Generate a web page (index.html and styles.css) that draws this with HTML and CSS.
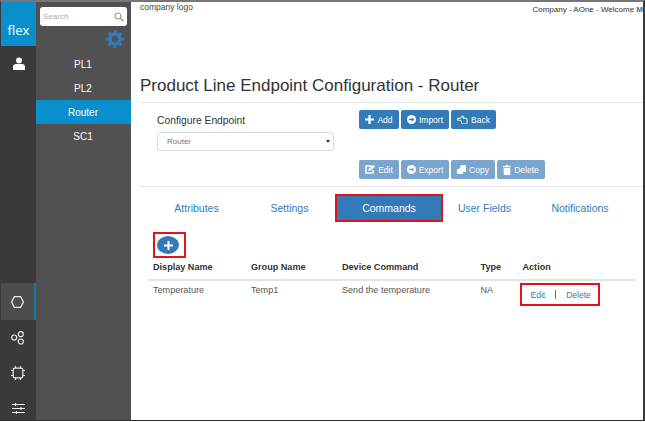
FILE: index.html
```html
<!DOCTYPE html>
<html lang="en">
<head>
<meta charset="utf-8">
<title>Product Line Endpoint Configuration</title>
<link rel="stylesheet" href="styles.css">
</head>
<body>
<div class="app">
  <nav class="rail">
    <div class="brand">flex</div>
    <div class="rail-item user">
      <svg width="14" height="14" viewBox="0 0 14 14"><circle cx="7" cy="3.6" r="3" fill="#fff"/><path d="M1 13V9.6C1 8 2.4 7 4 7h6c1.6 0 3 1 3 2.6V13z" fill="#fff"/></svg>
    </div>
    <div class="rail-fill"></div>
    <div class="rail-item active">
      <svg width="13" height="12" viewBox="0 0 13 12"><path d="M3.4.7h6.2l2.800 5.300-2.800 5.300H3.400L.6 6z" fill="none" stroke="#ececec" stroke-width="1.200"/></svg>
    </div>
    <div class="rail-item net">
      <svg width="14" height="14" viewBox="0 0 14 14"><g fill="none" stroke="#ececec" stroke-width="1.200"><circle cx="3.200" cy="6.500" r="2.500"/><circle cx="9.800" cy="3.200" r="2.500"/><circle cx="9.800" cy="10.500" r="2.500"/></g></svg>
    </div>
    <div class="rail-item chip">
      <svg width="14" height="14" viewBox="0 0 14 14"><g fill="none" stroke="#ececec" stroke-width="1.200"><rect x="2.200" y="2.200" width="9.600" height="9.600" rx="1.500"/><path d="M4.500 0v2M9.500 0v2M4.500 12v2M9.500 12v2M0 4.500h2M0 9.500h2M12 4.500h2M12 9.500h2"/></g></svg>
    </div>
    <div class="rail-item last">
      <svg width="13" height="11" viewBox="0 0 13 11"><g stroke="#ececec" stroke-width="1.100"><path d="M0 1.500h13M0 5.500h13M0 9.500h13"/><path d="M3.500 0v3M9 4v3M4.500 8v3"/></g></svg>
    </div>
  </nav>

  <aside class="panel">
    <div class="search">
      <span class="search-text">Search</span>
      <svg width="10" height="10" viewBox="0 0 10 10"><circle cx="4" cy="4" r="3" fill="none" stroke="#999" stroke-width="1.200"/><path d="M6.300 6.300 9.300 9.300" stroke="#999" stroke-width="1.500"/></svg>
    </div>
    <div class="gear-row">
      <svg width="18" height="18" viewBox="0 0 18 18"><g fill="none" stroke="#337ab7"><circle cx="9" cy="9" r="5" stroke-width="3.600"/><circle cx="9" cy="9" r="7.500" stroke-width="3" stroke-dasharray="3.100 2.790" stroke-dashoffset="1.550"/></g></svg>
    </div>
    <ul class="lines">
      <li>PL1</li>
      <li>PL2</li>
      <li class="current">Router</li>
      <li>SC1</li>
    </ul>
  </aside>

  <main class="main">
    <header class="top">
      <span class="logo">company logo</span>
      <span class="welcome">Company - AOne - Welcome <b>M</b></span>
    </header>
    <h1 class="title">Product Line Endpoint Configuration - Router</h1>

    <section class="config">
      <div class="endpoint">
        <label class="endpoint-label">Configure Endpoint</label>
        <div class="select"><span>Router</span><i class="caret"></i></div>
      </div>
      <div class="actions">
        <div class="btn-row">
          <a class="btn w-add"><svg width="9" height="9" viewBox="0 0 9 9"><path d="M3.400 0h2.200v3.400H9v2.200H5.600V9H3.400V5.600H0V3.400h3.400z" fill="#fff"/></svg>Add</a>
          <a class="btn w-import"><svg width="9" height="9" viewBox="0 0 9 9"><circle cx="4.500" cy="4.500" r="4.500" fill="#fff"/><path d="M2 3.700h3V2.400L7.300 4.500 5 6.600V5.300H2z" fill="#337ab7"/></svg>Import</a>
          <a class="btn w-back"><svg width="11" height="9" viewBox="0 0 11 9"><path d="M.5 3.200h3.300L5.500.8l.9.5-.5 1.900h3.300l.9.800v4.200l-.8.800H5.200L3.800 5.200H.5z" fill="none" stroke="#fff" stroke-width="1"/></svg>Back</a>
        </div>
        <div class="btn-row muted">
          <a class="btn w-add"><svg width="10" height="9" viewBox="0 0 10 9"><path d="M7 1H1v7h7V5" fill="none" stroke="#fff" stroke-width="1.500"/><path d="M3.500 4 8.500 0 10 1.500 5 6H3.500z" fill="#fff"/></svg>Edit</a>
          <a class="btn w-import"><svg width="9" height="9" viewBox="0 0 9 9"><circle cx="4.500" cy="4.500" r="4.500" fill="#fff"/><path d="M2 3.700h3V2.400L7.300 4.500 5 6.600V5.300H2z" fill="#7aa5cc"/></svg>Export</a>
          <a class="btn w-copy"><svg width="9" height="9" viewBox="0 0 9 9"><path d="M4 0h5v7H6v2H0V4.500L3 3.500z" fill="#fff"/></svg>Copy</a>
          <a class="btn w-delete"><svg width="8" height="10" viewBox="0 0 8 10"><path d="M0 1h2.500V0h3v1H8v1.200H0zM.7 3h6.600v7H.7z" fill="#fff"/></svg>Delete</a>
        </div>
      </div>
    </section>

    <section class="tabs">
      <a class="tab t-attr">Attributes</a>
      <a class="tab t-set">Settings</a>
      <a class="tab t-cmd">Commands</a>
      <a class="tab t-user">User Fields</a>
      <a class="tab t-note">Notifications</a>
    </section>

    <div class="add-wrap">
      <div class="add-box">
        <span class="add-round"><svg width="9" height="9" viewBox="0 0 9 9"><path d="M3.500 0h2v3.500H9v2H5.500V9h-2V5.500H0v-2h3.500z" fill="#fff"/></svg></span>
      </div>
    </div>

    <div class="table">
      <div class="thead">
        <span>Display Name</span><span>Group Name</span><span>Device Command</span><span>Type</span><span>Action</span>
      </div>
      <div class="trow">
        <span>Temperature</span><span>Temp1</span><span>Send the temperature</span><span>NA</span>
        <span class="row-actions"><a>Edit</a><i class="sep"></i><a>Delete</a></span>
      </div>
    </div>
  </main>
</div>
</body>
</html>
```
FILE: styles.css
```css
* { box-sizing: border-box; }
html, body { margin: 0; padding: 0; height: 100%; }
body { font-family: "Liberation Sans", Arial, sans-serif; background: #fff; overflow: hidden; }
a { text-decoration: none; cursor: pointer; }

.app {
  display: flex;
  width: 645px;
  height: 421px;
  border: 1px solid #3a3a3a;
  border-top: 2px solid #777;
  border-right-width: 2px;
  border-bottom-color: #333;
}

/* Icon rail */
.rail { width: 35px; flex: none; background: #3a3a3a; display: flex; flex-direction: column; }
.brand {
  height: 44px;
  flex: none;
  background: #0a8fcd;
  color: #fff;
  font-family: "Open Sans", sans-serif;
  font-size: 13px;
  display: flex;
  align-items: center;
  justify-content: center;
  padding-top: 12px;
}
.rail-item { display: flex; align-items: center; justify-content: center; flex: none; padding-right: 1px; }
.user { height: 36px; padding-right: 0; padding-left: 1px; }
.rail-fill { flex: 1; }
.active { height: 37px; background: #4d4d4d; border-right: 2px solid #1479a8; padding-right: 0; }
.net { height: 35px; }
.chip { height: 36px; }
.last { height: 29px; padding-top: 5px; }

/* Tree panel */
.panel { width: 95px; flex: none; background: #515151; display: flex; flex-direction: column; }
.search {
  margin: 5px 4px 0 4px;
  height: 19px;
  flex: none;
  background: #fff;
  border-radius: 3px;
  padding: 0 3px 0 3px;
  display: flex;
  align-items: center;
  justify-content: space-between;
}
.search-text { color: #aaa; font-size: 8px; }
.gear-row { display: flex; justify-content: flex-end; padding: 4px 7px 0 0; height: 26px; flex: none; }
.lines { list-style: none; margin: 0; padding: 0; }
.lines li {
  height: 24px;
  display: flex;
  align-items: center;
  justify-content: center;
  color: #fff;
  font-size: 10px;
  padding-right: 1px;
}
.lines li.current { background: #0a8fcd; }

/* Main */
.main { flex: 1; min-width: 0; display: flex; flex-direction: column; }
.top { display: flex; justify-content: space-between; height: 23px; padding: 0 0 0 9px; font-size: 8px; color: #444; }
.logo { font-size: 8.500px; }
.welcome { padding-top: 3px; white-space: nowrap; color: #333; }
.welcome b { color: #2e6da4; }
.title {
  margin: 0;
  padding: 50px 0 0 9px;
  font-size: 17px;
  line-height: 22px;
  font-weight: 400;
  color: #333;
  white-space: nowrap;
}

.config {
  margin: 5px 0 0 9px;
  width: 503px;
  height: 85px;
  border-top: 1px solid #e4e4e4;
  border-bottom: 1px solid #e4e4e4;
  display: flex;
}
.endpoint { width: 219px; padding: 11px 0 0 17px; display: flex; flex-direction: column; }
.endpoint-label { font-size: 10.300px; color: #333; line-height: 13px; }
.select {
  margin-top: 5px;
  width: 177px;
  height: 19px;
  border: 1px solid #dcdcdc;
  border-radius: 3px;
  display: flex;
  align-items: center;
  justify-content: space-between;
  padding: 0 3px 0 9px;
  font-size: 8px;
  color: #777;
}
.caret { width: 0; height: 0; border: 2px solid transparent; border-top: 3px solid #333; border-bottom: 0; }
.actions { display: flex; flex-direction: column; gap: 31px; padding-top: 7px; }
.btn-row { display: flex; gap: 2px; }
.btn {
  height: 19px;
  background: #337ab7;
  border-radius: 2px;
  color: #fff;
  font-size: 8.500px;
  display: flex;
  align-items: center;
  justify-content: center;
  gap: 3px;
}
.muted .btn { background: #7aa5cc; }
.w-add { width: 40px; }
.w-import { width: 48px; }
.w-back { width: 45px; }
.w-copy { width: 44px; }
.w-delete { width: 48px; }

.tabs { display: flex; height: 28px; margin: 7px 0 0 9px; }
.tab { display: flex; align-items: center; justify-content: center; color: #337ab7; font-size: 10.500px; }
.t-attr { width: 113px; }
.t-set { width: 82px; padding-right: 9px; }
.t-cmd { width: 108px; background: #337ab7; color: #fff; border: 2px solid #e3131c; }
.t-user { width: 83px; }
.t-note { width: 108px; }

.add-wrap { padding: 10px 0 0 22px; height: 36px; flex: none; }
.add-box { width: 33px; height: 26px; border: 2px solid #e3131c; display: flex; align-items: center; padding-left: 2px; }
.add-round { width: 22px; height: 18px; border-radius: 50%; background: #337ab7; display: flex; align-items: center; justify-content: center; }

.table { margin-left: 17px; width: 488px; font-size: 9.100px; color: #555; }
.thead, .trow { display: grid; grid-template-columns: 98px 91px 138.500px 42px 1fr; padding-left: 5px; }
.thead { height: 23px; padding-top: 4px; align-items: start; font-weight: 700; color: #333; border-bottom: 2px solid #e4e4e4; }
.trow { align-items: start; padding-top: 4px; }
.row-actions {
  width: 80px;
  height: 23px;
  margin: -2px 0 0 -3px;
  border: 2px solid #e3131c;
  display: flex;
  align-items: center;
  font-size: 8.500px;
  color: #337ab7;
  padding-left: 9px;
}
.sep { width: 1px; height: 9px; background: #337ab7; margin: 0 10px 0 10px; }
```
